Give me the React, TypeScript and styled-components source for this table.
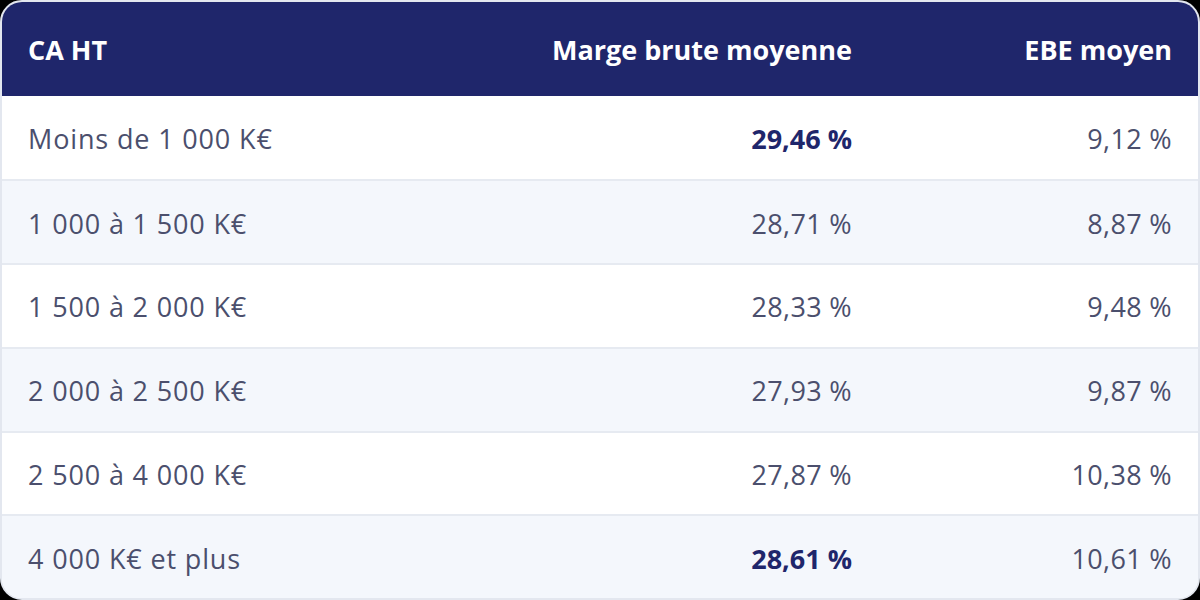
import React from "react";
import styled, { createGlobalStyle } from "styled-components";

const Global = createGlobalStyle`
  html, body { margin: 0; padding: 0; background: #000; }
  body { font-family: "Open Sans", "Noto Sans", sans-serif; }
  * { box-sizing: border-box; }
`;

const Card = styled.div`
  width: 1200px;
  height: 600px;
  border-radius: 22px;
  overflow: hidden;
  background: #ffffff;
  border: 2px solid #e3e7ef;
  display: flex;
  flex-direction: column;
`;

const Row = styled.div<{ $alt?: boolean; $head?: boolean }>`
  display: grid;
  grid-template-columns: 1fr 400px 320px;
  align-items: center;
  height: ${(p) => (p.$head ? "94px" : "84px")};
  background: ${(p) => (p.$head ? "#1f266b" : p.$alt ? "#f4f7fc" : "#ffffff")};
  border-top: ${(p) => (p.$head ? "none" : "2px solid #e6eaf1")};
  padding: 0 26px;
  &:nth-child(2) { border-top: none; }
`;

const Cell = styled.div<{ $right?: boolean; $head?: boolean; $strong?: boolean; $label?: boolean }>`
  text-align: ${(p) => (p.$right ? "right" : "left")};
  font-size: 27px;
  line-height: 1;
  padding-top: 2px;
  letter-spacing: ${(p) =>
    p.$head || p.$strong ? "0" : p.$label ? "0.85px" : "0.35px"};
  font-weight: ${(p) => (p.$head || p.$strong ? 700 : 400)};
  color: ${(p) => (p.$head ? "#ffffff" : p.$strong ? "#1f266b" : "#4b4f6d")};
  white-space: nowrap;
`;

const rows: [string, string, string, boolean][] = [
  ["Moins de 1 000 K€", "29,46 %", "9,12 %", true],
  ["1 000 à 1 500 K€", "28,71 %", "8,87 %", false],
  ["1 500 à 2 000 K€", "28,33 %", "9,48 %", false],
  ["2 000 à 2 500 K€", "27,93 %", "9,87 %", false],
  ["2 500 à 4 000 K€", "27,87 %", "10,38 %", false],
  ["4 000 K€ et plus", "28,61 %", "10,61 %", true],
];

export default function App() {
  return (
    <>
      <Global />
      <Card>
        <Row $head>
          <Cell $head>CA HT</Cell>
          <Cell $head $right>Marge brute moyenne</Cell>
          <Cell $head $right>EBE moyen</Cell>
        </Row>
        {rows.map(([a, b, c, s], i) => (
          <Row key={a} $alt={i % 2 === 1}>
            <Cell $label>{a}</Cell>
            <Cell $right $strong={s}>{b}</Cell>
            <Cell $right>{c}</Cell>
          </Row>
        ))}
      </Card>
    </>
  );
}
